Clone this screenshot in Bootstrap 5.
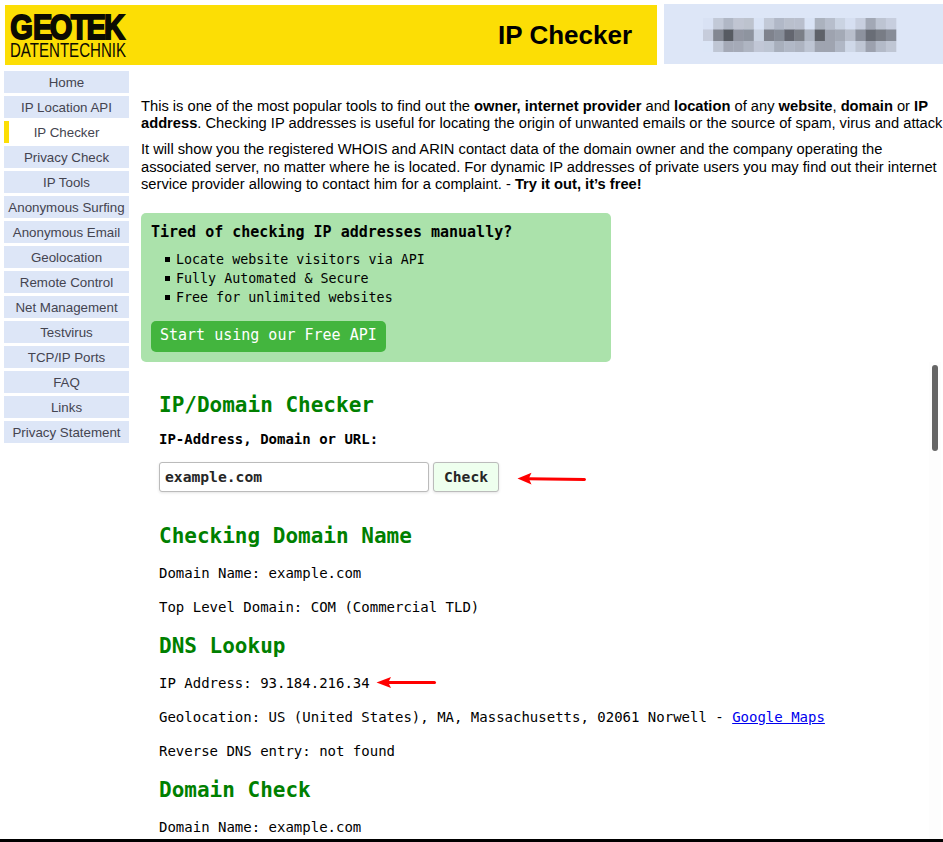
<!DOCTYPE html>
<html lang="en">
<head>
<meta charset="utf-8">
<meta name="viewport" content="width=device-width, initial-scale=1">
<title>IP Checker</title>
<link href="https://cdn.jsdelivr.net/npm/bootstrap@5.3.0/dist/css/bootstrap.min.css" rel="stylesheet">
<style>
html, body { overflow: hidden; }
body { font-family: "Liberation Sans", Arial, sans-serif; font-size: 14.7px; line-height: 17.6px; color: #000; background: #fff; }
.page { height: 842px; border-bottom: 3px solid #000; }
.topbar { padding: 4px 0 0 5px; gap: 7px; height: 65px; }
.brand-bar { width: 652px; height: 60px; margin-top: 1px; background: #fcde05; padding-right: 25px; }
.brand-bar h1 { font-size: 26px; line-height: 30px; }
.user-bar { height: 60px; background: #dde6f7; padding: 13px 0 0 38px; }
.side { width: 129px; padding: 6px 0 0 4px; }
.side .nav { gap: 3px; }
.side .nav-link { height: 22px; padding: 0; font-size: 13.33px; line-height: 23px; text-align: center; color: #444450; background: #dde6f7; border-radius: 0; white-space: nowrap; }
.side .nav-link.active { background: #fff; border-left: 5px solid #fcde05; padding-right: 5px; }
.content { padding: 32.6px 0 0 12px; }
.content p.intro { margin-bottom: 8.15px; white-space: nowrap; }
.mono { font-family: "DejaVu Sans Mono", monospace; font-size: 14px; line-height: 20px; }
.promo { width: 470px; height: 149px; margin-top: 19.25px; padding: 9px 10px; background: #abe2ab; border-radius: 5px; }
.promo h2 { font-size: 15px; line-height: 20px; margin-bottom: 8px; }
.promo ul { list-style: none; padding-left: 13px; margin-bottom: 14px; font-size: 13.33px; line-height: 19px; }
.promo li::before { content: ""; display: inline-block; width: 5px; height: 5px; margin-left: 1px; margin-right: 6px; vertical-align: 2px; background: #000; }
.promo .btn { width: 235px; height: 31px; padding: 4px 0 0 9px; font: 15px/20px "DejaVu Sans Mono", monospace; background: #43b53e; color: #fff; border: 0; border-radius: 5px; text-align: left; }
.checker { padding: 28px 0 0 18px; }
.checker h2 { font-size: 21px; line-height: 30px; color: #008000; margin-bottom: 12px; }
.checker p { margin-bottom: 14px; white-space: nowrap; }
.checker h2.first { margin-bottom: 9px; }
.checker label { margin-bottom: 13px; }
.checker form { gap: 4px; height: 30px; margin-bottom: 29px; }
.checker .form-control, .checker form .btn { height: 30px; padding: 0 5px; font: bold 14.67px/28px "DejaVu Sans Mono", monospace; color: #262626; border: 1px solid #bbb; border-radius: 3px; box-shadow: 0 1px 3px #0000001c; }
.checker .form-control { width: 270px; }
.checker form .btn { width: 66px; background: #eeffee; }
.checker form svg { margin-left: 14px; }
.checker a { color: #00e; }
.thumb { left: 932px; top: 365px; width: 6px; height: 86px; border-radius: 3px; background: #666; }
.track { left: 929px; top: 362px; width: 12px; height: 477px; background: #fdfdfd; }
</style>
</head>
<body>
<div class="page position-relative overflow-hidden">
  <header class="topbar d-flex">
    <div class="brand-bar d-flex align-items-center justify-content-between flex-shrink-0">
      <svg width="130" height="60" viewBox="0 0 130 60" aria-label="Geotek Datentechnik">
        <g font-family="Liberation Sans, Arial, sans-serif" fill="#0c0b02">
          <text transform="scale(.83 1)" x="6.2 33.7 54 79.3 98.3 119.3" y="33.8" font-size="35" font-weight="bold" stroke="#0c0b02" stroke-width="1.9">GEOTEK</text>
          <text x="5" y="52" font-size="19.5" textLength="116" lengthAdjust="spacingAndGlyphs">DATENTECHNIK</text>
        </g>
      </svg>
      <h1 class="fw-bold mb-0">IP Checker</h1>
    </div>
    <div class="user-bar flex-grow-1">
      <svg id="mosaic" class="d-block" width="196" height="36" aria-hidden="true"></svg>
    </div>
  </header>
  <div class="d-flex">
    <aside class="side flex-shrink-0">
      <nav class="nav flex-column">
        <a class="nav-link" href="#">Home</a>
        <a class="nav-link" href="#">IP Location API</a>
        <a class="nav-link active" href="#">IP Checker</a>
        <a class="nav-link" href="#">Privacy Check</a>
        <a class="nav-link" href="#">IP Tools</a>
        <a class="nav-link" href="#">Anonymous Surfing</a>
        <a class="nav-link" href="#">Anonymous Email</a>
        <a class="nav-link" href="#">Geolocation</a>
        <a class="nav-link" href="#">Remote Control</a>
        <a class="nav-link" href="#">Net Management</a>
        <a class="nav-link" href="#">Testvirus</a>
        <a class="nav-link" href="#">TCP/IP Ports</a>
        <a class="nav-link" href="#">FAQ</a>
        <a class="nav-link" href="#">Links</a>
        <a class="nav-link" href="#">Privacy Statement</a>
      </nav>
    </aside>
    <main class="content flex-grow-1">
      <p class="intro">This is one of the most popular tools to find out the <b>owner, internet provider</b> and <b>location</b> of any <b>website</b>, <b>domain</b> or <b>IP<br>address</b>. Checking IP addresses is useful for locating the origin of unwanted emails or the source of spam, virus and attack</p>
      <p class="intro mb-0">It will show you the registered WHOIS and ARIN contact data of the domain owner and the company operating the<br>associated server, no matter where he is located. For dynamic IP addresses of private users you may find out their internet<br>service provider allowing to contact him for a complaint. - <b>Try it out, it’s free!</b></p>
      <section class="promo mono">
        <h2 class="fw-bold">Tired of checking IP addresses manually?</h2>
        <ul>
          <li>Locate website visitors via API</li>
          <li>Fully Automated &amp; Secure</li>
          <li>Free for unlimited websites</li>
        </ul>
        <a class="btn d-block" href="#">Start using our Free API</a>
      </section>
      <section class="checker mono">
        <h2 class="fw-bold first">IP/Domain Checker</h2>
        <label class="d-block fw-bold" for="host">IP-Address, Domain or URL:</label>
        <form class="d-flex">
          <input class="form-control" id="host" type="text" value="example.com">
          <button class="btn" type="button">Check</button>
          <svg width="70" height="30" aria-hidden="true">
            <path d="M11 16.7L67.5 17.5" stroke="#f00" stroke-width="3" stroke-linecap="round" fill="none"/>
            <path d="M0.5 16.4L14.5 10.7L11.8 16.6L14.5 22.5Z" fill="#f00"/>
          </svg>
        </form>
        <h2 class="fw-bold">Checking Domain Name</h2>
        <p>Domain Name: example.com</p>
        <p>Top Level Domain: COM (Commercial TLD)</p>
        <h2 class="fw-bold">DNS Lookup</h2>
        <p class="d-flex">IP Address: 93.184.216.34
          <svg width="70" height="20" aria-hidden="true">
            <path d="M17 9.5H64.5" stroke="#f00" stroke-width="3" stroke-linecap="round"/>
            <path d="M6.5 9.5L21 4L18.3 9.5L21 15Z" fill="#f00"/>
          </svg>
        </p>
        <p>Geolocation: US (United States), MA, Massachusetts, 02061 Norwell - <a href="#">Google Maps</a></p>
        <p>Reverse DNS entry: not found</p>
        <h2 class="fw-bold">Domain Check</h2>
        <p>Domain Name: example.com</p>
      </section>
    </main>
  </div>
  <div class="track position-absolute"></div>
  <div class="thumb position-absolute"></div>
</div>
<script src="https://cdn.jsdelivr.net/npm/bootstrap@5.3.0/dist/js/bootstrap.bundle.min.js"></script>
<script>
// Pixelated block that hides the visitor's address
const rows = [
  'd9e2f4 c2c9d7 b0b7c5 c0c5d2 bdc3ce d9e3f5 c2c9d7 b1b8c7 b9bfcc b9bfcd d9e3f5 abb2be b7becc cad3e2 d6dff1 c8cfdf a2a8b5 bdc4d2 c7cede',
  'c6ccdb 838791 575b62 9296a2 8e949f cad3e2 7f838d 878d98 63666f 7b7f87 aeb5c2 5f6269 9ea3af a4aab6 b8becb 8d929e 696d76 787c85 878c97',
  'dce6f7 bfc6d4 a4a9b6 a5aab7 afb5c2 c1c7d6 bdc5d3 a8afbc b1b8c6 adb3c0 bec5d3 9fa4b0 9fa4b0 b0b7c5 cfd8e8 bfc6d4 9ca1ae b3bac8 bfc6d4'
];
const step = 193 / 19, tops = [1, 12.4, 24], heights = [11.4, 11.6, 11];
document.getElementById('mosaic').innerHTML = rows.map((row, r) =>
  row.split(' ').map((c, i) =>
    `<rect x="${1 + i * step}" y="${tops[r]}" width="${step + .3}" height="${heights[r]}" fill="#${c}"/>`).join('')).join('');
</script>
</body>
</html>
